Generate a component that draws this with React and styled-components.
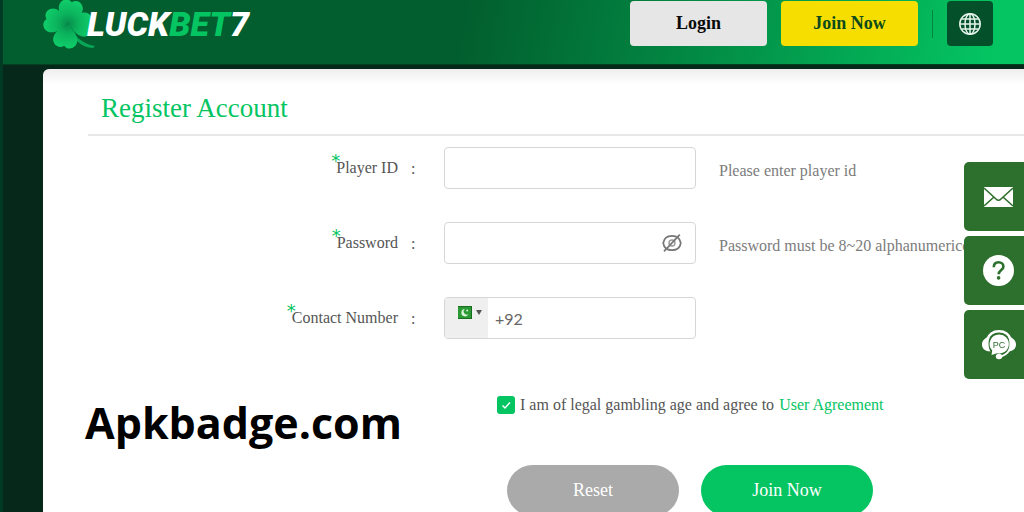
import React from 'react';
import styled, { createGlobalStyle, ThemeProvider } from 'styled-components';

const theme = {
  serif: '"Liberation Serif", "Times New Roman", serif',
  green: '#04c562',
  greenDark: '#025e2e',
  greenTab: '#2d6f2d',
  yellow: '#f5de00',
  text: '#555555',
  hint: '#7c7c7c',
  border: '#d6d6d6',
};

const GlobalStyle = createGlobalStyle`
  * {
    box-sizing: border-box;
  }

  body {
    margin: 0;
    background-color: #06281a;
    font-family: ${theme.serif};
    font-size: 16px;
    color: ${theme.text};
  }
`;

const Page = styled.div`
  height: 100vh;
  overflow: hidden;
  border-left: 3px solid #003a24;
`;

const Header = styled.header`
  display: flex;
  align-items: flex-start;
  justify-content: space-between;
  height: 65px;
  padding: 0 31px 0 40px;
  background: linear-gradient(100deg, ${(props) => props.theme.greenDark} 45%, #028642 66%, #04c562 97%);
  border-bottom: 1px solid #02401f;
`;

const Brand = styled.a`
  display: flex;
  align-items: flex-start;
  color: #ffffff;
  text-decoration: none;

  svg {
    flex: none;
    margin-right: -10px;
  }
`;

const BrandName = styled.span`
  position: relative;
  padding-top: 4px;
  font-family: Roboto, "Liberation Sans", sans-serif;
  font-size: 34px;
  line-height: 40px;
  font-weight: 900;
  font-style: italic;

  em {
    color: ${(props) => props.theme.green};
  }
`;

const HeaderActions = styled.div`
  display: flex;
  align-items: center;
  gap: 14px;
  padding-top: 1px;
`;

const HeaderButton = styled.button`
  width: 137px;
  height: 45px;
  border: 0;
  border-radius: 4px;
  background-color: ${(props) => (props.$primary ? props.theme.yellow : '#e6e6e6')};
  color: ${(props) => (props.$primary ? '#0c4a1c' : '#0a0a0a')};
  font-family: inherit;
  font-size: 18px;
  font-weight: 700;
`;

const HeaderDivider = styled.span`
  width: 1px;
  height: 28px;
  background-color: #028642;
`;

const LanguageButton = styled.button`
  display: flex;
  align-items: center;
  justify-content: center;
  width: 46px;
  height: 45px;
  padding: 0;
  border: 0;
  border-radius: 4px;
  background-color: #04502b;
`;

const Card = styled.main`
  min-height: 100vh;
  margin: 4px 0 0 40px;
  padding: 19px 0 0 45px;
  border-radius: 6px 0 0 0;
  background: #ffffff linear-gradient(#eeeeee, #ffffff 16px) no-repeat;
`;

const Title = styled.h1`
  margin: 0;
  padding: 0 13px 6px;
  border-bottom: 2px solid #e8e8e8;
  color: ${(props) => props.theme.green};
  font-size: 27px;
  line-height: 40px;
  font-weight: 400;
`;

const Fields = styled.div`
  display: grid;
  gap: 33px;
  padding-top: 11px;
`;

const FieldRow = styled.div`
  display: grid;
  grid-template-columns: 310px 46px 252px 1fr;
  align-items: center;
`;

const Label = styled.label`
  justify-self: end;
  position: relative;
`;

const Required = styled.span`
  position: absolute;
  top: -4px;
  left: -5px;
  color: ${(props) => props.theme.green};
  font-family: "DejaVu Sans", sans-serif;
  font-size: 18px;
  line-height: 12px;
`;

const Colon = styled.span`
  padding: 2px 0 0 13px;
`;

const Control = styled.div`
  display: flex;
  align-items: center;
  height: 42px;
  border: 1px solid ${(props) => props.theme.border};
  border-radius: 4px;
  background-color: #ffffff;
  overflow: hidden;
`;

const TextInput = styled.input`
  flex: 1;
  min-width: 0;
  height: 100%;
  padding: 0 7px;
  border: 0;
  outline: 0;
  background: transparent;
  color: #666666;
  font-family: Lato, sans-serif;
  font-size: 16px;
`;

const IconButton = styled.button`
  display: flex;
  margin-right: 13px;
  padding: 0;
  border: 0;
  background: transparent;
`;

const CountryButton = styled.button`
  display: flex;
  align-items: flex-start;
  gap: 4px;
  width: 43px;
  height: 100%;
  padding: 8px 0 0 13px;
  border: 0;
  background-color: #efefef;
`;

const Hint = styled.span`
  padding: 5px 0 0 23px;
  color: ${(props) => props.theme.hint};
  white-space: nowrap;
`;

const Bottom = styled.div`
  display: grid;
  grid-template-columns: 409px 1fr;
  padding-top: 56px;
`;

const SiteName = styled.p`
  margin: 0 0 0 -3px;
  color: #000000;
  font-family: "Open Sans", "Noto Sans", sans-serif;
  font-size: 43px;
  line-height: 56px;
  font-weight: 700;
`;

const Agreement = styled.div`
  display: flex;
  align-items: center;
  height: 20px;
  gap: 5px;
`;

const Checkbox = styled.input`
  appearance: none;
  width: 18px;
  height: 18px;
  margin: 0;
  border-radius: 3px;
  background-color: ${(props) => props.theme.green};
`;

const CheckboxWrap = styled.span`
  position: relative;
  display: flex;

  svg {
    position: absolute;
    inset: 0;
    pointer-events: none;
  }
`;

const AgreementLink = styled.a`
  color: ${(props) => props.theme.green};
  text-decoration: none;
`;

const FormActions = styled.div`
  display: flex;
  gap: 22px;
  padding: 50px 0 0 10px;
`;

const PillButton = styled.button`
  width: 172px;
  height: 51px;
  border: 0;
  border-radius: 26px;
  background-color: ${(props) => (props.$primary ? props.theme.green : '#aaaaaa')};
  color: #ffffff;
  font-family: inherit;
  font-size: 18px;
`;

const SideTabs = styled.nav`
  position: fixed;
  top: 162px;
  right: 0;
  display: grid;
  gap: 5px;
`;

const SideTab = styled.a`
  display: flex;
  align-items: center;
  justify-content: center;
  width: 60px;
  height: 69px;
  padding-left: 9px;
  border-radius: 5px 0 0 5px;
  background-color: ${(props) => props.theme.greenTab};
`;

const LEAF = 'M0 0C-5 -5 -11 -8 -12 -15C-13 -22 -5 -27 0 -22C5 -27 13 -22 12 -15C11 -8 5 -5 0 0Z';

function Clover() {
  return (
    <svg width="54" height="50" viewBox="0 0 54 50" aria-hidden="true">
      <defs>
        <radialGradient id="leaf" gradientUnits="userSpaceOnUse" cx="0" cy="0" r="25">
          <stop offset="0" stopColor="#068c4b" />
          <stop offset="0.4" stopColor="#0bb15c" />
          <stop offset="1" stopColor="#10cf6b" />
        </radialGradient>
      </defs>
      <path d="M26 24C30 35 39 44 52 46L50 48C38 48 29 38 25 25Z" fill="#08a757" />
      <g fill="url(#leaf)">
        <path d={LEAF} transform="translate(25 24) rotate(10)" />
        <path d={LEAF} transform="translate(25 24) rotate(92)" />
        <path d={LEAF} transform="translate(25 24) rotate(190)" />
        <path d={LEAF} transform="translate(25 24) rotate(283)" />
      </g>
    </svg>
  );
}

function GlobeIcon() {
  return (
    <svg width="24" height="24" viewBox="0 0 24 24" fill="none" stroke="#e4f4ea" strokeWidth="1.5" aria-hidden="true">
      <circle cx="12" cy="12" r="10.2" />
      <ellipse cx="12" cy="12" rx="5" ry="10.2" />
      <path d="M12 2v20M2 12h20M3.500 7h17M3.500 17h17" />
    </svg>
  );
}

function EyeOffIcon() {
  return (
    <svg width="20" height="18" viewBox="0 0 20 18" fill="none" stroke="#777777" strokeWidth="1.7" aria-hidden="true">
      <path d="M1.200 9C2 4.200 5.500 1.800 10 1.800S18 4.200 18.800 9C18 13.800 14.500 16.200 10 16.200S2 13.800 1.200 9Z" />
      <circle cx="10" cy="9" r="3" stroke="#999999" strokeWidth="1.4" />
      <path d="M2 17.300L17.800 0.700" />
    </svg>
  );
}

function FlagIcon() {
  return (
    <svg width="14" height="13" viewBox="0 0 14 13" aria-hidden="true">
      <rect width="14" height="13" fill="#2c9a34" />
      <path d="M0 0h14v1H0ZM0 12h14v1H0ZM13 0h1v13h-1Z" fill="#176d20" />
      <path d="M7 3A3.700 3.700 0 1 0 10.500 8A3 3 0 1 1 7 3Z" fill="#d8f2d8" />
      <circle cx="9.200" cy="4.600" r="1" fill="#d8f2d8" />
    </svg>
  );
}

function MailIcon() {
  return (
    <svg width="29" height="20" viewBox="0 0 29 20" aria-hidden="true">
      <rect width="29" height="20" fill="#ffffff" />
      <path d="M0 1L12 12Q14.500 14.500 17 12L29 1M0 19L10 10M29 19L19 10" fill="none" stroke="#2d6f2d" strokeWidth="1.600" />
    </svg>
  );
}

function HelpIcon() {
  return (
    <svg width="31" height="31" viewBox="0 0 31 31" fill="none" aria-hidden="true">
      <circle cx="15.500" cy="15.500" r="15.500" fill="#ffffff" />
      <path d="M10.800 12.200C10.800 9 12.800 7.300 15.600 7.300S20.400 9 20.400 11.700C20.400 15 15.700 15.200 15.700 19.300" stroke="#2d6f2d" strokeWidth="2.600" />
      <circle cx="15.600" cy="22.900" r="1.800" fill="#2d6f2d" />
    </svg>
  );
}

function SupportIcon() {
  return (
    <svg width="34" height="30" viewBox="0 0 34 30" aria-hidden="true">
      <path d="M5 10C7 4 11 1.300 17 1.300S27 4 29 10" fill="none" stroke="#ffffff" strokeWidth="2.600" />
      <path d="M8 6.500C3 7.500 0 10.500 0 14.500S3 21.500 8.500 21.500C6 17 6 11 8 6.500ZM26 6.500C31 7.500 34 10.500 34 14.500S31 21.500 25.500 21.500C28 17 28 11 26 6.500Z" fill="#ffffff" />
      <path d="M17 4.500A9.500 9.500 0 1 1 15 23.200L9.500 25L10.200 20.500A9.500 9.500 0 0 1 17 4.500Z" fill="#ffffff" />
      <path d="M27.500 20C25 24 22 26 17.500 26.500" fill="none" stroke="#ffffff" strokeWidth="2" />
      <ellipse cx="17" cy="26.500" rx="3.200" ry="2.800" fill="#ffffff" />
      <text x="17" y="17.500" textAnchor="middle" fontFamily="Liberation Sans, sans-serif" fontSize="9" fill="#2d6f2d">PC</text>
    </svg>
  );
}

function Field({ id, label, hint, children }) {
  return (
    <FieldRow>
      <Label htmlFor={id}>
        <Required>*</Required>
        {label}
      </Label>
      <Colon>:</Colon>
      <Control>{children}</Control>
      {hint && <Hint>{hint}</Hint>}
    </FieldRow>
  );
}

function App() {
  return (
    <ThemeProvider theme={theme}>
      <GlobalStyle />
      <Page>
        <Header>
          <Brand href="#">
            <Clover />
            <BrandName>
              LUCK
              <em>BET</em>
              7
            </BrandName>
          </Brand>
          <HeaderActions>
            <HeaderButton type="button">Login</HeaderButton>
            <HeaderButton type="button" $primary>Join Now</HeaderButton>
            <HeaderDivider />
            <LanguageButton type="button" aria-label="Language">
              <GlobeIcon />
            </LanguageButton>
          </HeaderActions>
        </Header>
        <Card>
          <Title>Register Account</Title>
          <form>
            <Fields>
              <Field id="player-id" label="Player ID" hint="Please enter player id">
                <TextInput id="player-id" type="text" />
              </Field>
              <Field id="password" label="Password" hint="Password must be 8~20 alphanumericc">
                <TextInput id="password" type="password" />
                <IconButton type="button" aria-label="Show password">
                  <EyeOffIcon />
                </IconButton>
              </Field>
              <Field id="contact" label="Contact Number">
                <CountryButton type="button" aria-label="Country code">
                  <FlagIcon />
                  <svg width="6" height="13" viewBox="0 0 6 13" aria-hidden="true">
                    <path d="M0 4h6L3 9Z" fill="#555555" />
                  </svg>
                </CountryButton>
                <TextInput id="contact" type="tel" defaultValue="+92" />
              </Field>
            </Fields>
            <Bottom>
              <SiteName>Apkbadge.com</SiteName>
              <div>
                <Agreement>
                  <CheckboxWrap>
                    <Checkbox id="agree" type="checkbox" defaultChecked />
                    <svg width="18" height="18" viewBox="0 0 18 18" fill="none" aria-hidden="true">
                      <path d="M5.500 9.500L8 12L13 6.500" stroke="#ffffff" strokeWidth="1.500" />
                    </svg>
                  </CheckboxWrap>
                  <label htmlFor="agree">I am of legal gambling age and agree to</label>
                  <AgreementLink href="#">User Agreement</AgreementLink>
                </Agreement>
                <FormActions>
                  <PillButton type="reset">Reset</PillButton>
                  <PillButton type="submit" $primary>Join Now</PillButton>
                </FormActions>
              </div>
            </Bottom>
          </form>
        </Card>
        <SideTabs>
          <SideTab href="#" aria-label="Mail"><MailIcon /></SideTab>
          <SideTab href="#" aria-label="Help"><HelpIcon /></SideTab>
          <SideTab href="#" aria-label="Support"><SupportIcon /></SideTab>
        </SideTabs>
      </Page>
    </ThemeProvider>
  );
}

export default App;
